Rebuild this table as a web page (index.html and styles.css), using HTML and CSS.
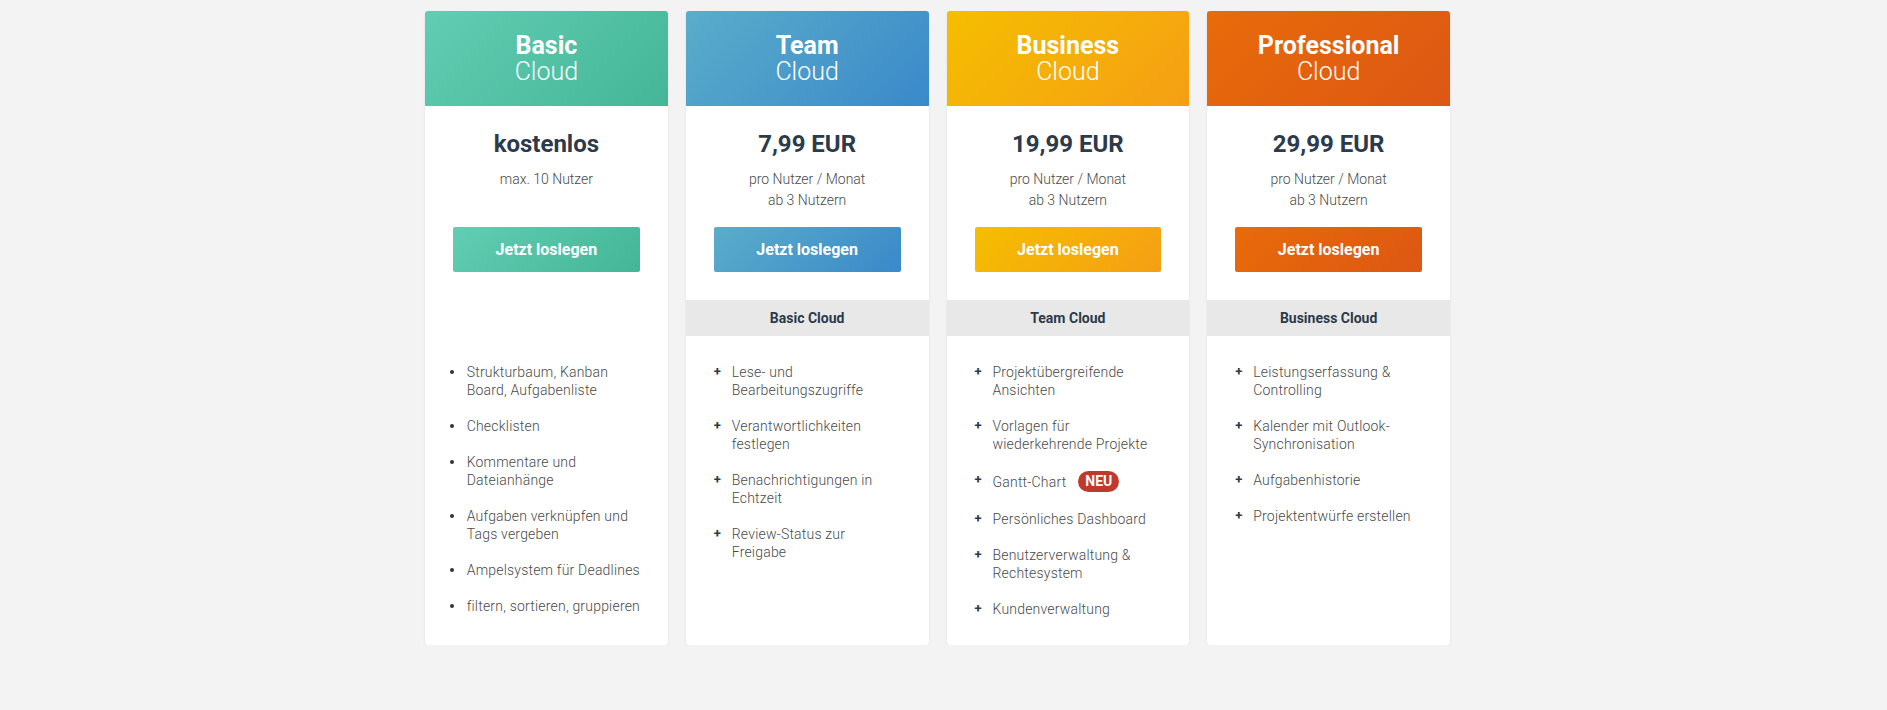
FILE: index.html
```html
<!DOCTYPE html>
<html lang="de">
<head>
<meta charset="utf-8">
<title>Preise</title>
<link rel="stylesheet" href="styles.css">
</head>
<body>
<div class="plans">
  <div class="card">
    <div class="head head-basic"><div class="name">Basic</div><div class="cloud">Cloud</div></div>
    <div class="price">kostenlos</div>
    <div class="sub">max. 10 Nutzer</div>
    <div class="btn-wrap"><a class="btn head-basic">Jetzt loslegen</a></div>
    <div class="band band-empty">&nbsp;</div>
    <ul class="features dots">
      <li>Strukturbaum, Kanban Board, Aufgabenliste</li>
      <li>Checklisten</li>
      <li>Kommentare und Dateianhänge</li>
      <li>Aufgaben verknüpfen und Tags vergeben</li>
      <li>Ampelsystem für Deadlines</li>
      <li>filtern, sortieren, gruppieren</li>
    </ul>
  </div>
  <div class="card">
    <div class="head head-team"><div class="name">Team</div><div class="cloud">Cloud</div></div>
    <div class="price">7,99 EUR</div>
    <div class="sub">pro Nutzer / Monat<br>ab 3 Nutzern</div>
    <div class="btn-wrap"><a class="btn head-team">Jetzt loslegen</a></div>
    <div class="band">Basic Cloud</div>
    <ul class="features plus">
      <li>Lese- und Bearbeitungszugriffe</li>
      <li>Verantwortlichkeiten festlegen</li>
      <li>Benachrichtigungen in Echtzeit</li>
      <li>Review-Status zur Freigabe</li>
    </ul>
  </div>
  <div class="card">
    <div class="head head-business"><div class="name">Business</div><div class="cloud">Cloud</div></div>
    <div class="price">19,99 EUR</div>
    <div class="sub">pro Nutzer / Monat<br>ab 3 Nutzern</div>
    <div class="btn-wrap"><a class="btn head-business">Jetzt loslegen</a></div>
    <div class="band">Team Cloud</div>
    <ul class="features plus">
      <li>Projektübergreifende Ansichten</li>
      <li>Vorlagen für wiederkehrende Projekte</li>
      <li><span>Gantt-Chart <span class="badge">NEU</span></span></li>
      <li>Persönliches Dashboard</li>
      <li>Benutzerverwaltung &amp; Rechtesystem</li>
      <li>Kundenverwaltung</li>
    </ul>
  </div>
  <div class="card">
    <div class="head head-pro"><div class="name">Professional</div><div class="cloud">Cloud</div></div>
    <div class="price">29,99 EUR</div>
    <div class="sub">pro Nutzer / Monat<br>ab 3 Nutzern</div>
    <div class="btn-wrap"><a class="btn head-pro">Jetzt loslegen</a></div>
    <div class="band">Business Cloud</div>
    <ul class="features plus">
      <li>Leistungserfassung &amp; Controlling</li>
      <li>Kalender mit Outlook-Synchronisation</li>
      <li>Aufgabenhistorie</li>
      <li>Projektentwürfe erstellen</li>
    </ul>
  </div>
</div>
</body>
</html>
```
FILE: styles.css
```css
html, body {
  margin: 0;
  padding: 0;
  background: #f3f3f3;
  font-family: Roboto, "Liberation Sans", Arial, sans-serif;
}
.plans {
  display: flex;
  gap: 18px;
  width: 1025px;
  margin-left: 425px;
  padding-top: 11px;
  align-items: stretch;
}
.card {
  flex: 1 1 0;
  background: #fff;
  border-radius: 3px;
  box-shadow: 0 1px 3px rgba(0,0,0,0.08);
  display: flex;
  flex-direction: column;
}
.head {
  border-radius: 3px 3px 0 0;
  padding: 22px 0 21px;
  text-align: center;
  color: #fff;
  font-size: 25px;
  line-height: 26px;
}
.head .name { font-weight: 700; }
.head .cloud { font-weight: 300; }
.head-basic { background: linear-gradient(135deg, #62cdb3 0%, #44b697 100%); }
.head-team { background: linear-gradient(135deg, #5badca 0%, #3a89ca 100%); }
.head-business { background: linear-gradient(135deg, #f5be00 0%, #f59f14 100%); }
.head-pro { background: linear-gradient(135deg, #e96b09 0%, #dc5714 100%); }
.price {
  margin-top: 23.5px;
  text-align: center;
  font-size: 24px;
  line-height: 28px;
  font-weight: 700;
  color: #2c3a4b;
}
.sub {
  margin-top: 11.5px;
  min-height: 42px;
  text-align: center;
  font-size: 14px;
  line-height: 21px;
  font-weight: 300;
  color: #4a4a4a;
}
.btn-wrap {
  padding: 16px 28px 0;
}
.btn {
  display: block;
  height: 45px;
  line-height: 45px;
  border-radius: 2px;
  text-align: center;
  color: #fff;
  font-weight: 700;
  font-size: 16px;
}
.band {
  margin-top: 28px;
  height: 36px;
  line-height: 36px;
  background: #e8e8e8;
  text-align: center;
  font-size: 14px;
  font-weight: 700;
  color: #2c3a4b;
}
.band-empty { background: transparent; }
.features {
  list-style: none;
  margin: 27px 0 0;
  padding: 0 30px 27px 28px;
  display: flex;
  flex-direction: column;
  gap: 18px;
  font-size: 14px;
  letter-spacing: 0.2px;
  line-height: 18px;
  font-weight: 300;
  color: #4a4a4a;
}
.features.dots { padding-right: 26px; }
.features li {
  display: flex;
  align-items: flex-start;
}
.dots li::before {
  content: "";
  flex: 0 0 4px;
  width: 4px;
  height: 4px;
  border-radius: 50%;
  background: #333;
  margin: 7px 12.7px 0 -3px;
}
.plus li::before {
  content: "+";
  flex: 0 0 18px;
  font-weight: 700;
  color: #2c3a4b;
  font-size: 13px;
  line-height: 18px;
  letter-spacing: 0;
}
.plus li > span {
  display: inline-flex;
  align-items: center;
  gap: 12px;
}
.badge {
  display: inline-block;
  background: #c0392b;
  color: #fff;
  font-weight: 700;
  font-size: 14px;
  letter-spacing: 0;
  line-height: 21px;
  padding: 0 7px;
  border-radius: 11px;
}
```
